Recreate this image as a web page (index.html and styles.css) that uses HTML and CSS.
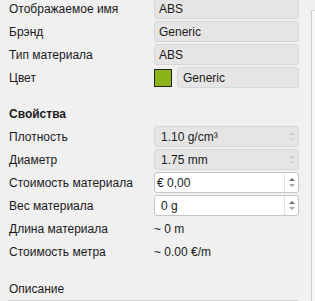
FILE: index.html
```html
<!DOCTYPE html>
<html>
<head>
<meta charset="utf-8">
<link rel="stylesheet" href="styles.css">
</head>
<body>
<div class="page">
  <div class="panel">
    <div class="grid top">
      <div class="label">Отображаемое имя</div><div class="field ro">ABS</div>
      <div class="label">Брэнд</div><div class="field ro">Generic</div>
      <div class="label">Тип материала</div><div class="field ro">ABS</div>
      <div class="label">Цвет</div>
      <div class="color-row"><span class="swatch"></span><div class="field ro grow">Generic</div></div>
    </div>
    <div class="section">Свойства</div>
    <div class="grid props">
      <div class="label">Плотность</div>
      <div class="field ro spin"><span class="val">1.10 g/cm³</span><span class="arrows dim"><i class="up"></i><i class="down"></i></span></div>
      <div class="label">Диаметр</div>
      <div class="field ro spin"><span class="val">1.75 mm</span><span class="arrows dim"><i class="up"></i><i class="down"></i></span></div>
      <div class="label">Стоимость материала</div>
      <div class="field ed spin"><span class="val tight">€ 0,00</span><span class="arrows"><i class="up"></i><i class="down"></i></span></div>
      <div class="label">Вес материала</div>
      <div class="field ed spin"><span class="val">0 g</span><span class="arrows"><i class="up"></i><i class="down"></i></span></div>
      <div class="label">Длина материала</div><div class="plain">~ 0 m</div>
      <div class="label">Стоимость метра</div><div class="plain">~ 0.00 €/m</div>
    </div>
    <div class="desc">Описание</div>
    <div class="rule"></div>
  </div>
  <div class="side"></div>
</div>
</body>
</html>
```

FILE: styles.css
```css
html, body {
  margin: 0;
  padding: 0;
  background: #f0f0f0;
}
body {
  font-family: "Liberation Sans", Arial, sans-serif;
  font-size: 12px;
  color: #1a1a1a;
  overflow: hidden;
}
.page {
  display: flex;
  width: 315px;
  height: 301px;
  overflow: hidden;
}
.panel {
  width: 312px;
  padding-left: 9px;
  box-sizing: border-box;
}
.side {
  width: 3px;
  margin-top: 10px;
  border-top: 1px solid #d8d8d8;
  border-left: 1px solid #cfcfcf;
  background: #f6f6f6;
}
.grid {
  display: grid;
  grid-template-columns: 145px 145px;
  grid-auto-rows: 21px;
  row-gap: 2px;
  align-items: center;
}
.top {
  margin-top: -2px;
}
.label {
  white-space: nowrap;
  line-height: 21px;
  padding-top: 1px;
}
.field {
  height: 21px;
  box-sizing: border-box;
  border-radius: 3px;
  display: flex;
  align-items: center;
  padding-left: 4px;
  white-space: nowrap;
}
.ro {
  background: #e5e5e5;
  border: 1px solid #d7d7d7;
}
.ed {
  background: #ffffff;
  border: 1px solid #c6c6c6;
}
.color-row {
  display: flex;
  align-items: center;
  gap: 5px;
  height: 21px;
}
.swatch {
  width: 18px;
  height: 18px;
  box-sizing: border-box;
  background: #8db31b;
  border: 1px solid #222;
}
.grow {
  flex: 1;
  padding-left: 5px;
}
.section {
  font-weight: bold;
  margin-top: 16px;
  height: 21px;
  line-height: 21px;
}
.props {
  margin-top: 1px;
}
.spin {
  padding-left: 0;
  padding-right: 0;
}
.spin .val {
  flex: 1;
  padding-left: 6px;
}
.spin .val.tight {
  padding-left: 2px;
}
.arrows {
  width: 13px;
  height: 100%;
  border-left: 1px solid #e2e2e2;
  display: flex;
  flex-direction: column;
  align-items: center;
  justify-content: center;
  gap: 3px;
}
.arrows.dim {
  border-left-color: transparent;
}
.arrows i {
  display: block;
  width: 0;
  height: 0;
  border-left: 3px solid transparent;
  border-right: 3px solid transparent;
}
.arrows .up {
  border-bottom: 3px solid #6f6f6f;
}
.arrows .down {
  border-top: 3px solid #a9a9a9;
}
.arrows.dim .up {
  border-bottom-color: #cdcdcd;
}
.arrows.dim .down {
  border-top-color: #d3d3d3;
}
.plain {
  padding-left: 0;
  padding-top: 1px;
  white-space: nowrap;
}
.desc {
  margin-top: 16px;
  height: 21px;
  line-height: 21px;
  padding-top: 1px;
}
.rule {
  height: 0;
  margin-top: 0;
  width: 290px;
  margin-left: -1px;
  border-top: 1px solid #d4d4d4;
}
```
